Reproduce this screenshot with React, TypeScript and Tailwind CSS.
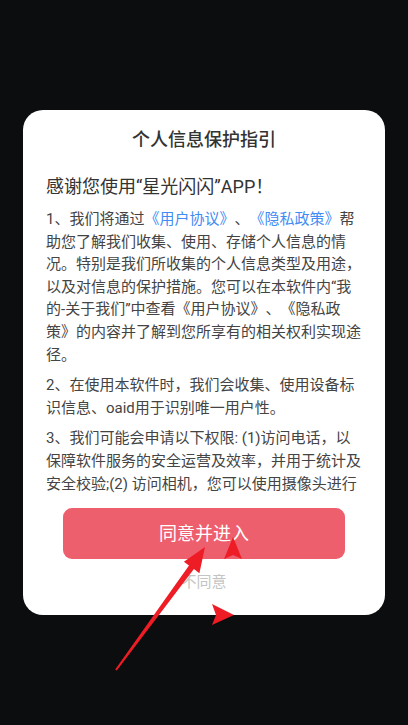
import React from 'react'

const font = { fontFamily: 'Roboto, "Noto Sans CJK SC", sans-serif' }

function Link({ children }: { children: React.ReactNode }) {
  return <span className="text-[#3f8cf3]">{children}</span>
}

export default function App() {
  return (
    <div className="relative flex h-[725px] w-[408px] items-center justify-center bg-[#0c0d0f]" style={font}>
      <div className="flex h-[505px] w-[362px] flex-col rounded-[20px] bg-white px-[23px] pb-[23px] pt-[18px] [text-spacing-trim:space-all]">
        <h2 className="text-center text-[18px] leading-[24px] font-medium text-[#333333]">个人信息保护指引</h2>

        <div className="mt-[22px] h-[321px] shrink-0 overflow-hidden">
          <p className="text-[18px] leading-[26px] text-[#333333]">感谢您使用“星光闪闪”APP！</p>
          <div className="mt-[8px] space-y-[8px] text-[15px] leading-[22.6px] text-[#444444]">
            <p>
              1、我们将通过<Link>《用户协议》</Link>、<Link>《隐私政策》</Link>帮助您了解我们收集、使用、存储个人信息的情况。特别是我们所收集的个人信息类型及用途，以及对信息的保护措施。您可以在本软件内“我的-关于我们”中查看《用户协议》、《隐私政策》的内容并了解到您所享有的相关权利实现途径。
            </p>
            <p>2、在使用本软件时，我们会收集、使用设备标识信息、oaid用于识别唯一用户性。</p>
            <p>
              3、我们可能会申请以下权限: (1)访问电话，以保障软件服务的安全运营及效率，并用于统计及安全校验;(2) 访问相机，您可以使用摄像头进行拍照、扫码，以便上传头像或图片。
            </p>
          </div>
        </div>

        <button className="mx-auto mt-[13px] h-[51px] w-[282px] shrink-0 rounded-[9px] bg-[#ee5f6e] text-[18px] text-white">
          同意并进入
        </button>
        <div className="mt-[13px] shrink-0 text-center text-[15px] leading-[20px] text-[#c4c4c4]">不同意</div>
      </div>

      <svg className="pointer-events-none absolute inset-0" width="408" height="725" viewBox="0 0 408 725">
        <polygon
          fill="#ee1c25"
          points="115.2,669.5 189,565.4 183.9,561.7 205,547 199.4,573.2 193.9,569 116.8,670.5"
        />
        <polygon fill="#ee1c25" points="233,537 242,559 233,555 224,559" />
        <polygon fill="#ee1c25" points="234,615 212,625 216,615 212,604" />
      </svg>
    </div>
  )
}
